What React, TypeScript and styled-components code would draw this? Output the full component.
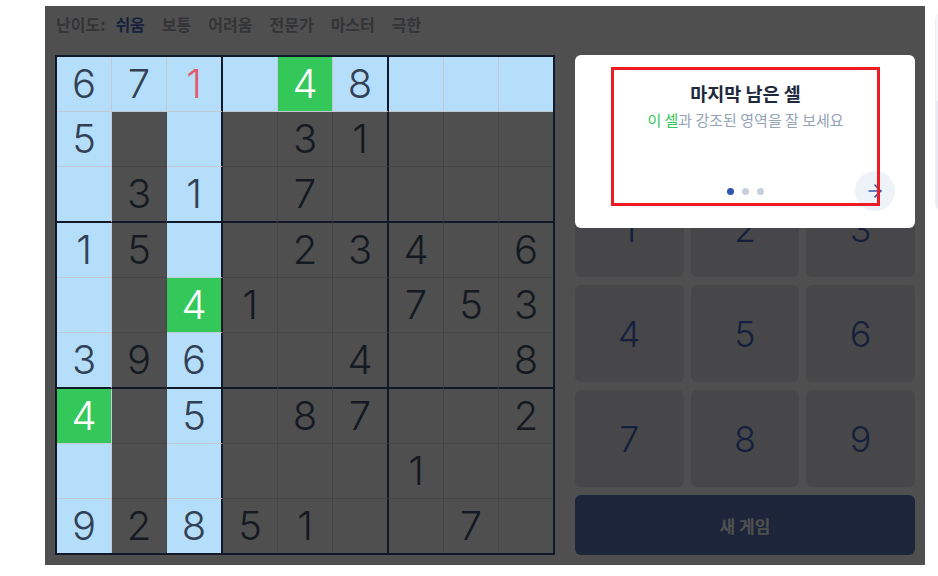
import React from "react";
import styled, { createGlobalStyle } from "styled-components";
import { ArrowRight } from "lucide-react";

const GlobalStyle = createGlobalStyle`
  html, body {
    margin: 0;
    padding: 0;
    background: #ffffff;
    overflow: hidden;
  }
  body {
    font-family: "Noto Sans CJK KR", "Noto Sans", sans-serif;
  }
  * { box-sizing: border-box; }
`;

type Tone = "light" | "green" | "dim";

const PUZZLE = [
  "671 48   ",
  "5   31   ",
  " 31 7    ",
  "15  234 6",
  "  41  753",
  "396  4  8",
  "4 5 87  2",
  "      1  ",
  "92851  7 ",
];

const GREEN_CELLS = ["0-4", "4-2", "6-0"];
const ERROR_CELLS = ["0-2"];
const LEVELS = ["쉬움", "보통", "어려움", "전문가", "마스터", "극한"];

const Page = styled.div`
  display: flex;
  align-items: flex-start;
  padding: 6px 0 0 45px;
  width: 1200px;
`;

const Shell = styled.div`
  position: relative;
  flex-shrink: 0;
  width: 880px;
  height: 559px;
  padding: 0 10px 10px 10px;
  background: #ffffff;
`;

const Dimmer = styled.div`
  position: absolute;
  inset: 0;
  background: rgba(0, 0, 0, 0.69);
  z-index: 5;
`;

const LevelBar = styled.div`
  display: flex;
  align-items: center;
  height: 36px;
  margin-bottom: 13px;
  padding-left: 1px;
  gap: 17px;
  font-size: 16px;
  font-weight: 700;
`;

const LevelLabel = styled.span`
  color: #a4a7ad;
  margin-right: -7px;
`;

const Level = styled.span<{ $active?: boolean }>`
  color: ${(p) => (p.$active ? "#4a6bc8" : "#a4a7ad")};
`;

const Main = styled.div`
  display: flex;
  gap: 20px;
`;

const Board = styled.div`
  position: relative;
  z-index: 6;
  display: grid;
  grid-template-columns: repeat(9, auto);
  width: 500px;
  height: 500px;
  border: 2px solid #111827;
  background: #4f4f4f;
`;

const Cell = styled.div<{ $tone: Tone; $right: number; $bottom: number; $error?: boolean }>`
  box-sizing: content-box;
  width: 54px;
  height: 54px;
  display: flex;
  align-items: center;
  justify-content: center;
  font-family: Inter, "Liberation Sans", sans-serif;
  font-weight: 300;
  font-size: 40px;
  line-height: 1;
  background: ${(p) =>
    p.$tone === "green" ? "#34c759" : p.$tone === "light" ? "#b5defb" : "#4f4f4f"};
  color: ${(p) =>
    p.$tone === "green"
      ? "#ffffff"
      : p.$error
      ? "#e35a6b"
      : p.$tone === "light"
      ? "#334155"
      : "#151922"};
  border-right: ${(p) =>
    p.$right === 0
      ? "none"
      : p.$right === 2
      ? "2px solid #111827"
      : `1px solid ${p.$tone === "dim" ? "#444547" : "#c2c9d3"}`};
  border-bottom: ${(p) =>
    p.$bottom === 0
      ? "none"
      : p.$bottom === 2
      ? "2px solid #111827"
      : `1px solid ${p.$tone === "dim" ? "#444547" : "#c2c9d3"}`};
`;

const Side = styled.div`
  position: relative;
  width: 340px;
  display: flex;
  flex-direction: column;
  gap: 8px;
`;

const Stats = styled.div`
  height: 117px;
  border-radius: 6px;
  background: #f1f5f9;
`;

const Pad = styled.div`
  display: grid;
  grid-template-columns: repeat(3, 1fr);
  column-gap: 7px;
  row-gap: 8px;
`;

const PadKey = styled.button`
  height: 97px;
  border: none;
  border-radius: 6px;
  background: #e4e6ea;
  color: #4466c4;
  font-family: Inter, "Liberation Sans", sans-serif;
  font-weight: 300;
  font-size: 36px;
  padding: 0;
`;

const NewGame = styled.button`
  height: 60px;
  border: none;
  border-radius: 6px;
  background: #5a77b8;
  color: #ffffff;
  font-family: "Noto Sans CJK KR", sans-serif;
  font-size: 17px;
  font-weight: 700;
`;

const TipCard = styled.div`
  position: absolute;
  top: 0;
  left: 0;
  right: 0;
  height: 173px;
  z-index: 7;
  background: #ffffff;
  border-radius: 6px;
  padding: 12px 35px 22px 36px;
`;

const TipFrame = styled.div`
  position: relative;
  z-index: 2;
  height: 100%;
  border: 3px solid #ec1c24;
  display: flex;
  flex-direction: column;
  align-items: center;
  padding: 11px 0 8px;
  pointer-events: none;
`;

const TipTitle = styled.div`
  font-size: 18.5px;
  font-weight: 700;
  line-height: 24px;
  color: #1e293b;
`;

const TipText = styled.div`
  margin-top: 5px;
  font-size: 15px;
  line-height: 20px;
  color: #94a3b8;
`;

const Accent = styled.span`
  color: #34c759;
`;

const Dots = styled.div`
  margin-top: auto;
  display: flex;
  gap: 8px;
`;

const Dot = styled.span<{ $active?: boolean }>`
  width: 7px;
  height: 7px;
  border-radius: 50%;
  background: ${(p) => (p.$active ? "#2f55b0" : "#c8cfd9")};
`;

const NextButton = styled.button`
  position: absolute;
  right: 20px;
  bottom: 17px;
  width: 40px;
  height: 40px;
  border: none;
  border-radius: 50%;
  background: #eef2f9;
  color: #3656b3;
  display: flex;
  align-items: center;
  justify-content: center;
  padding: 0;
`;

const SidePanel = styled.div`
  flex-shrink: 0;
  margin: 6px 0 0 10px;
  width: 220px;
  display: flex;
  flex-direction: column;
  border-radius: 8px;
  border: 1px solid #eef0f5;
  overflow: hidden;
`;

const SideTop = styled.div`
  height: 88px;
  background: #f6f7fb;
`;

const SideBottom = styled.div`
  height: 110px;
  background: #e8ebf3;
`;

const lineWeight = (i: number) => (i === 8 ? 0 : i === 2 || i === 5 ? 2 : 1);

export default function App() {
  return (
    <>
      <GlobalStyle />
      <Page>
        <Shell>
          <Dimmer />
          <LevelBar>
            <LevelLabel>난이도:</LevelLabel>
            {LEVELS.map((l, i) => (
              <Level key={l} $active={i === 0}>
                {l}
              </Level>
            ))}
          </LevelBar>
          <Main>
            <Board>
              {PUZZLE.map((row, r) =>
                row.split("").map((ch, c) => {
                  const key = `${r}-${c}`;
                  const tone: Tone = GREEN_CELLS.includes(key)
                    ? "green"
                    : r === 0 || c === 0 || c === 2
                    ? "light"
                    : "dim";
                  return (
                    <Cell
                      key={key}
                      $tone={tone}
                      $right={lineWeight(c)}
                      $bottom={lineWeight(r)}
                      $error={ERROR_CELLS.includes(key)}
                    >
                      {ch.trim()}
                    </Cell>
                  );
                })
              )}
            </Board>
            <Side>
              <Stats />
              <Pad>
                {[1, 2, 3, 4, 5, 6, 7, 8, 9].map((n) => (
                  <PadKey key={n}>{n}</PadKey>
                ))}
              </Pad>
              <NewGame>새 게임</NewGame>
              <TipCard>
                <TipFrame>
                  <TipTitle>마지막 남은 셀</TipTitle>
                  <TipText>
                    <Accent>이 셀</Accent>과 강조된 영역을 잘 보세요
                  </TipText>
                  <Dots>
                    <Dot $active />
                    <Dot />
                    <Dot />
                  </Dots>
                </TipFrame>
                <NextButton aria-label="다음">
                  <ArrowRight size={20} strokeWidth={2} />
                </NextButton>
              </TipCard>
            </Side>
          </Main>
        </Shell>
        <SidePanel>
          <SideTop />
          <SideBottom />
        </SidePanel>
      </Page>
    </>
  );
}
